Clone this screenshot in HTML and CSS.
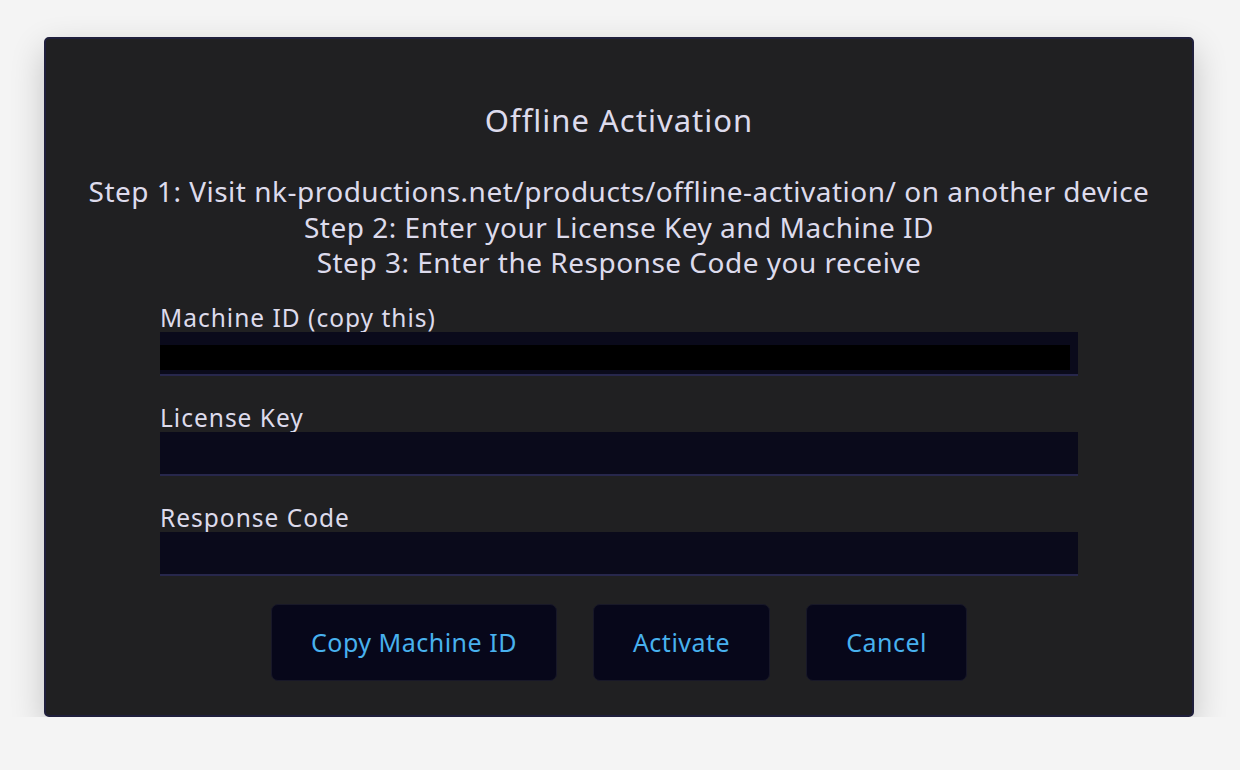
FILE: index.html
```html
<!DOCTYPE html>
<html>
<head>
<meta charset="utf-8">
<link rel="stylesheet" href="styles.css">
</head>
<body>
<div class="dialog">
  <h1 class="title">Offline Activation</h1>
  <div class="steps">
    <p>Step 1: Visit nk-productions.net/products/offline-activation/ on another device</p>
    <p>Step 2: Enter your License Key and Machine ID</p>
    <p>Step 3: Enter the Response Code you receive</p>
  </div>
  <div class="form">
    <div class="field">
      <label class="label">Machine ID (copy this)</label>
      <div class="input input-machine"><div class="inner"></div></div>
    </div>
    <div class="field">
      <label class="label">License Key</label>
      <div class="input"></div>
    </div>
    <div class="field">
      <label class="label">Response Code</label>
      <div class="input"></div>
    </div>
  </div>
  <div class="buttons">
    <button class="btn">Copy Machine ID</button>
    <button class="btn">Activate</button>
    <button class="btn">Cancel</button>
  </div>
</div>
</body>
</html>
```

FILE: styles.css
```css
html, body {
  margin: 0;
  padding: 0;
  background: #f4f4f4;
}
body {
  padding-top: 37px;
  font-family: "Noto Sans", "Open Sans", sans-serif;
  color: #dddbec;
}
.dialog {
  box-sizing: border-box;
  width: 1150px;
  height: 680px;
  margin: 0 auto;
  transform: translateX(-1px);
  background: #202022;
  border: 2px solid #1f1f3c;
  border-radius: 5px;
  box-shadow: 0 12px 34px rgba(0, 0, 0, 0.2);
  padding-top: 61px;
  display: flex;
  flex-direction: column;
  align-items: center;
}
.title {
  margin: 0;
  font-size: 31px;
  line-height: 40px;
  font-weight: 400;
  letter-spacing: 1px;
}
.steps {
  margin-top: 34px;
  text-align: center;
  font-size: 28px;
  line-height: 35.5px;
  letter-spacing: 0.5px;
}
.steps p {
  margin: 0;
  white-space: nowrap;
}
.form {
  margin-top: 23px;
  width: 918px;
  display: flex;
  flex-direction: column;
  gap: 28px;
}
.field {
  display: flex;
  flex-direction: column;
}
.label {
  font-size: 24.5px;
  line-height: 28px;
  height: 28px;
  letter-spacing: 1px;
}
.input {
  box-sizing: border-box;
  height: 44px;
  background: #0a0a1b;
  border-bottom: 2px solid #27274c;
}
.input-machine {
  padding-top: 13px;
}
.inner {
  width: 910px;
  height: 25px;
  background: #000000;
}
.buttons {
  margin-top: 28px;
  display: flex;
  gap: 36px;
}
.btn {
  box-sizing: border-box;
  height: 77px;
  padding: 0 39px;
  background: #07071a;
  border: 1px solid #181828;
  border-radius: 7px;
  color: #48b1ee;
  font-family: "Noto Sans", "Open Sans", sans-serif;
  font-size: 25px;
  letter-spacing: 0.5px;
}
```
